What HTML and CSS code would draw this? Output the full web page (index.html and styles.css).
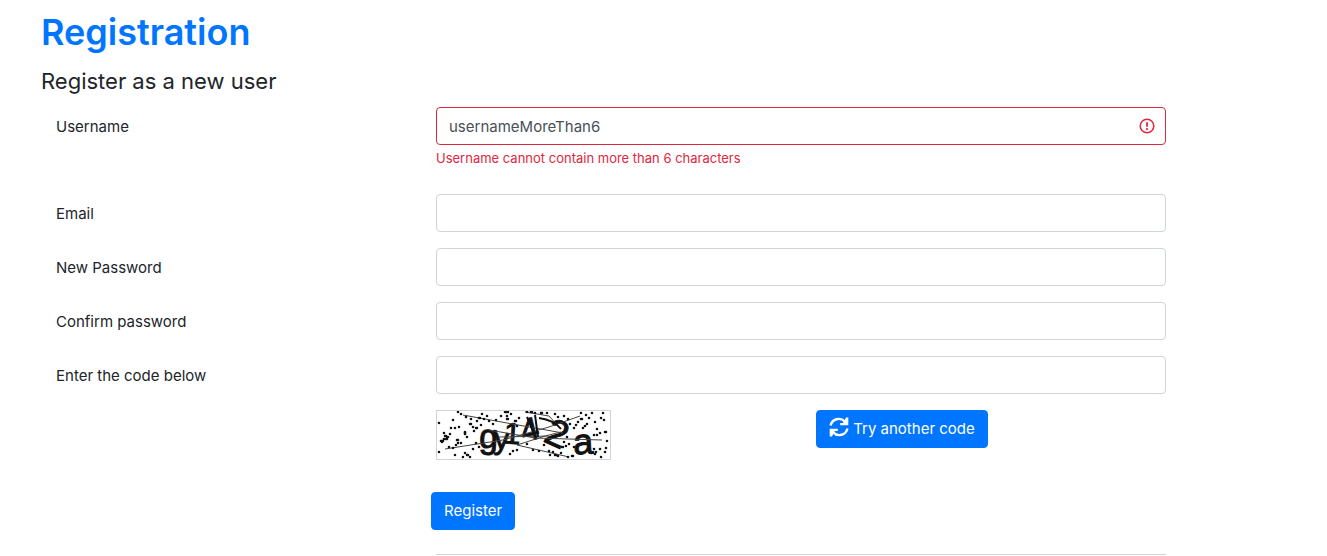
FILE: index.html
```html
<!DOCTYPE html>
<html lang="en">
<head>
  <meta charset="UTF-8">
  <meta name="viewport" content="width=device-width, initial-scale=1.0">
  <title>Registration</title>
  <link rel="stylesheet" href="styles.css">
</head>
<body>
  <div class="container">
    <h1>Registration</h1>
    <h2>Register as a new user</h2>
    <form>
      <div class="form-row">
        <label for="username">Username</label>
        <div class="field">
          <input type="text" id="username" class="invalid" value="usernameMoreThan6">
          <svg class="error-icon" viewBox="0 0 16 16">
            <circle cx="8" cy="8" r="6.8" fill="none" stroke="#e02640" stroke-width="1.5"/>
            <path d="M8 4.2v4.6" stroke="#e02640" stroke-width="1.8"/>
            <circle cx="8" cy="11.1" r="1.1" fill="#e02640"/>
          </svg>
          <div class="feedback">Username cannot contain more than 6 characters</div>
        </div>
      </div>
      <div class="form-row">
        <label for="email">Email</label>
        <div class="field"><input type="email" id="email"></div>
      </div>
      <div class="form-row">
        <label for="password">New Password</label>
        <div class="field"><input type="password" id="password"></div>
      </div>
      <div class="form-row">
        <label for="confirm">Confirm password</label>
        <div class="field"><input type="password" id="confirm"></div>
      </div>
      <div class="form-row">
        <label for="code">Enter the code below</label>
        <div class="field"><input type="text" id="code"></div>
      </div>
      <div class="form-row">
        <div class="captcha">
          <svg viewBox="0 0 173 48">
            <g class="captcha-text">
              <text x="42" y="37" font-size="34" transform="rotate(3 50 30)">g</text>
              <text x="57" y="38" font-size="30" transform="rotate(2 65 30)">y</text>
              <text x="67" y="33" font-size="30" transform="rotate(4 76 22)">1</text>
              <text x="84" y="29" font-size="32" transform="rotate(-14 94 20)">4</text>
              <text x="109" y="36" font-size="38" transform="rotate(24 121 24)">2</text>
              <text x="136" y="43" font-size="36" transform="rotate(-3 145 30)">a</text>
            </g>
            <path class="scratch" d="M8 38L66 29L112 16L143 5M52 19L98 27L165 29M26 4L70 12L126 22M62 26L112 25M88 1L112 5L124 18M80 34L108 25L124 21M80 34L132 46"/>
            <path class="scratch thick" d="M90 6L99 27M98 4L101 26M102 7Q117 9 124 18"/>
            <path class="dots" d="M2 12h0M2 41h0M16 9h0M21 1h0M24 3h0M29 6h0M14 17h0M7 22h0M8 25h1M5 31h0M10 26h1M13 23h0M4 30h2M7 28h0M9 28h1M20 29h1M21 32h0M19 34h0M16 37h0M12 36h0M18 44h0M26 46h0M30 44h1M28 42h0M36 38h0M39 32h0M42 36h0M28 21v2M30 26h0M24 32h0M34 8h0M33 13h1M39 17h1M40 10h0M42 7h1M45 3h0M47 8h0M44 14h0M36 16h0M52 10h0M50 5h0M56 13h0M59 9h0M64 5h0M68 1h3M70 5h0M70 8h1M74 3h0M78 10h1M82 7h0M80 15h0M76 40h0M73 43h0M80 39h0M90 33h0M96 39h0M107 34h0M102 40h0M112 40h0M116 41h0M113 44h0M118 44h1M121 45h0M124 42h0M125 36h1M129 35h0M132 33h0M137 36h0M127 31h0M130 26h0M139 14h0M141 11h0M144 8h1M148 15h0M146 17h0M150 13h0M137 17h0M133 13h0M131 8h0M127 5h0M121 6h0M118 3h0M110 2h0M104 2h1M98 2h0M94 1h1M90 1h0M144 2h0M149 4h0M152 7h0M155 2h0M158 11h0M164 7h0M167 9h0M166 2h0M160 18h0M157 24h0M160 24h0M163 22h0M168 21h1M157 38h0M159 41h0M163 38h0M169 37h0M168 41h0M158 43h0M164 46h0M135 45h1M131 46h0M170 30h0M33 46h0M22 16h0M18 17h0M37 20h0"/>
          </svg>
        </div>
        <div class="reload">
          <button type="button" class="btn">
            <svg class="reload-icon" viewBox="0 0 20 20">
              <path d="M1.6 8.6A8.3 8.3 0 0 1 15.8 4.6M18.4 11.4A8.3 8.3 0 0 1 4.2 15.4" fill="none" stroke="#fff" stroke-width="2.4"/>
              <path d="M19.3 .5V8.3H11.2V6H14.2L17 .5ZM.7 19.5V11.7H8.8V14H5.8L3 19.5Z" fill="#fff"/>
            </svg>
            Try another code
          </button>
        </div>
      </div>
      <div class="form-row submit-row">
        <div class="submit"><button type="submit" class="btn">Register</button></div>
      </div>
      <div class="form-row">
        <hr>
      </div>
    </form>
  </div>
</body>
</html>
```
FILE: styles.css
```css
* {
  box-sizing: border-box;
}

body {
  margin: 0;
  background: #fff;
  color: #212529;
  font-family: Inter, "Liberation Sans", sans-serif;
  font-size: 15px;
  line-height: 24px;
}

.container {
  max-width: 1181px;
  padding: 8px 0 0 41px;
}

h1,
h2 {
  margin: 0 0 8px;
}

h1 {
  color: #0075ff;
  font-size: 36px;
  font-weight: 600;
  line-height: 48px;
}

h2 {
  font-size: 22px;
  font-weight: 400;
  line-height: 35px;
}

.form-row {
  display: grid;
  grid-template-columns: repeat(3, 1fr);
  margin-bottom: 16px;
}

label {
  padding: 8px 15px 6px;
}

.field {
  position: relative;
  grid-column: 2 / 4;
  padding: 0 15px;
}

input {
  display: block;
  width: 100%;
  height: 38px;
  padding: 6px 12px;
  border: 1px solid #ced4da;
  border-radius: 4px;
  background: #fff;
  color: #495057;
  font: inherit;
}

input.invalid {
  border-color: #e02640;
}

.error-icon {
  position: absolute;
  top: 11px;
  right: 26px;
  width: 16px;
  height: 16px;
}

.feedback {
  height: 33px;
  padding-top: 3px;
  color: #e02640;
  font-size: 13px;
  line-height: 20px;
}

.captcha {
  grid-column: 2;
  padding: 0 15px;
}

.captcha svg {
  display: block;
  width: 175px;
  height: 50px;
  border: 1px solid #ced4da;
}

.captcha-text {
  fill: #111;
  stroke: #111;
  stroke-width: 1;
  font-family: "Liberation Sans", sans-serif;
}

.scratch {
  fill: none;
  stroke: #444;
  stroke-width: 1;
}

.scratch.thick {
  stroke: #111;
  stroke-width: 2;
}

.dots {
  stroke: #111;
  stroke-width: 2.6;
  stroke-linecap: round;
}

.reload {
  padding: 0 15px;
}

.btn {
  height: 38px;
  padding: 6px 12px;
  border: 1px solid #0075ff;
  border-radius: 4px;
  background: #0075ff;
  color: #fff;
  font: inherit;
  cursor: pointer;
}

.reload-icon {
  width: 20px;
  height: 20px;
  vertical-align: -3px;
}

.submit-row {
  margin: 32px 0 24px;
}

.submit {
  grid-column: 2;
  padding-left: 10px;
}

hr {
  grid-column: 2 / 4;
  width: calc(100% - 30px);
  margin: 0 15px;
  border: 0;
  border-top: 1px solid #ced4da;
}
```
